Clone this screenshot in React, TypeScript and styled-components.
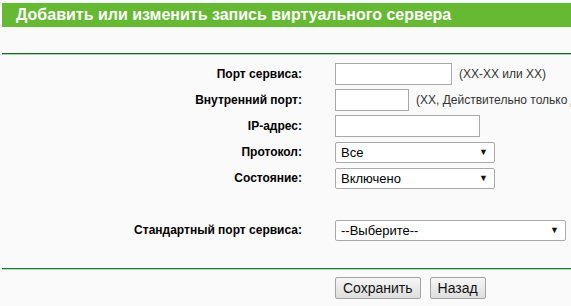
import styled, { createGlobalStyle } from "styled-components";

const GlobalStyle = createGlobalStyle`
    html, body {
        margin: 0;
        padding: 0;
        background: #fafafa;
        font-family: "Liberation Sans", Arial, sans-serif;
        overflow: hidden;
    }
`;

type RowType = {
    label: string,
    kind: "input" | "select",
    width: number,
    value?: string,
    hint?: string,
}

const rows: RowType[] = [
    {label: "Порт сервиса:", kind: "input", width: 117, hint: "(XX-XX или XX)"},
    {label: "Внутренний порт:", kind: "input", width: 74, hint: "(XX, Действительно только для одного порта)"},
    {label: "IP-адрес:", kind: "input", width: 145},
    {label: "Протокол:", kind: "select", width: 160, value: "Все"},
    {label: "Состояние:", kind: "select", width: 160, value: "Включено"},
];

const Field = ({row}: {row: RowType}) => (
    <Row>
        <Label>{row.label}</Label>
        <Cell>
            {row.kind === "input"
                ? <TextBox $w={row.width}/>
                : <SelectBox $w={row.width}><span>{row.value}</span><Arrow>▼</Arrow></SelectBox>}
            {row.hint && <Hint>{row.hint}</Hint>}
        </Cell>
    </Row>
);

export default function App() {
    return (
        <Page>
            <GlobalStyle/>
            <Header>Добавить или изменить запись виртуального сервера</Header>
            <Divider $top="#1f5f3a" $bottom="#a6d6ae" $space={26}/>
            <Form>
                {rows.map(r => <Field key={r.label} row={r}/>)}
                <Row/>
                <Row>
                    <Label>Стандартный порт сервиса:</Label>
                    <Cell>
                        <SelectBox $w={231}><span>--Выберите--</span><Arrow>▼</Arrow></SelectBox>
                    </Cell>
                </Row>
            </Form>
            <Divider $top="#10803c" $bottom="#b4dcbc" $space={25}/>
            <Buttons>
                <Button>Сохранить</Button>
                <Button>Назад</Button>
            </Buttons>
        </Page>
    );
}

const Page = styled.div`
    padding: 3px 0 0 2px;
    overflow: hidden;
`;

const Header = styled.div`
    height: 24px;
    background: #66b933;
    color: #fff;
    font-weight: 700;
    font-size: 16px;
    line-height: 24px;
    padding-left: 14px;
    white-space: nowrap;
`;

const Divider = styled.div<{$top: string, $bottom: string, $space: number}>`
    margin-top: ${p => p.$space}px;
    height: 1px;
    background: ${p => p.$top};
    border-bottom: 1px solid ${p => p.$bottom};
`;

const Form = styled.div`
    padding-top: 6px;
    display: flex;
    flex-direction: column;
`;

const Row = styled.div`
    height: 26px;
    display: grid;
    grid-template-columns: 300px 1fr;
    column-gap: 33px;
    align-items: center;
`;

const Label = styled.div`
    text-align: right;
    font-weight: 700;
    font-size: 12px;
    color: #000;
`;

const Cell = styled.div`
    display: flex;
    align-items: center;
    gap: 7px;
    white-space: nowrap;
    overflow: hidden;
`;

const TextBox = styled.div<{$w: number}>`
    flex: none;
    width: ${p => p.$w}px;
    height: 22px;
    box-sizing: border-box;
    border: 1px solid #a9a9a9;
    background: #fff;
`;

const SelectBox = styled.div<{$w: number}>`
    flex: none;
    width: ${p => p.$w}px;
    height: 21px;
    box-sizing: border-box;
    border: 1px solid #a9a9a9;
    border-radius: 2px;
    background: #fff;
    display: flex;
    align-items: center;
    justify-content: space-between;
    padding: 0 6px 0 5px;
    font-size: 13px;
    color: #000;
`;

const Arrow = styled.span`
    font-size: 9px;
    color: #111;
`;

const Hint = styled.span`
    font-size: 12px;
    color: #333;
`;

const Buttons = styled.div`
    display: flex;
    gap: 9px;
    padding: 7px 0 0 333px;
`;

const Button = styled.button`
    height: 22px;
    padding: 0 7px;
    font-family: "Liberation Sans", Arial, sans-serif;
    font-size: 14px;
    color: #111;
    border: 1px solid #a3a3a3;
    border-radius: 2px;
    background: linear-gradient(#f6f6f6, #dedede);
`;
